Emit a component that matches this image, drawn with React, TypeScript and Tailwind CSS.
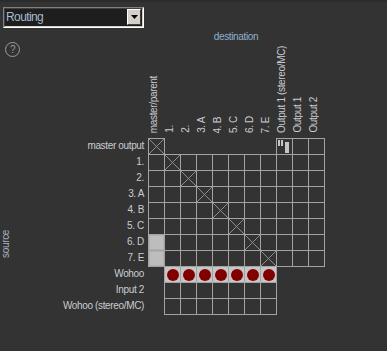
import React from 'react';

type Kind = '-' | 'box' | 'x' | 'fill' | 'dot' | 'meter';

const columns = [
  'master/parent',
  '1.',
  '2.',
  '3. A',
  '4. B',
  '5. C',
  '6. D',
  '7. E',
  'Output 1 (stereo/MC)',
  'Output 1',
  'Output 2',
];

const channelRows = ['1.', '2.', '3. A', '4. B', '5. C', '6. D', '7. E'];

const rows: { label: string; cells: Kind[] }[] = [
  { label: 'master output', cells: ['x', '-', '-', '-', '-', '-', '-', '-', 'meter', 'box', 'box'] },
  ...channelRows.map((label, r) => ({
    label,
    cells: columns.map((_, c): Kind => {
      if (c === r + 1) return 'x';
      if (c === 0 && r >= 5) return 'fill';
      return 'box';
    }),
  })),
  { label: 'Wohoo', cells: ['-', 'dot', 'dot', 'dot', 'dot', 'dot', 'dot', 'dot', '-', '-', '-'] },
  { label: 'Input 2', cells: ['-', 'box', 'box', 'box', 'box', 'box', 'box', 'box', '-', '-', '-'] },
  { label: 'Wohoo (stereo/MC)', cells: ['-', 'box', 'box', 'box', 'box', 'box', 'box', 'box', '-', '-', '-'] },
];

const Cell = ({ kind }: { kind: Kind }) => {
  if (kind === '-') return <div />;
  return (
    <div className="w-[17px] h-[17px] border border-[#a3a3a3] flex items-center justify-center">
      {kind === 'x' && (
        <svg width="15" height="15" viewBox="0 0 15 15">
          <path d="M0 0L15 15M15 0L0 15" stroke="#8e8e8e" strokeWidth="1" />
        </svg>
      )}
      {kind === 'fill' && <div className="w-full h-full bg-[#bdbdbd] border border-[#b0b0b0]" />}
      {kind === 'dot' && (
        <div className="w-full h-full bg-[#c6c6c6] flex items-center justify-center">
          <div className="w-[12px] h-[12px] rounded-full bg-[#800000]" />
        </div>
      )}
      {kind === 'meter' && (
        <svg width="15" height="15" viewBox="0 0 15 15">
          <rect x="1" y="1" width="2" height="6" fill="#c4c4c4" />
          <rect x="4" y="1" width="2" height="6" fill="#c4c4c4" />
          <rect x="8" y="3" width="4" height="11" fill="#c4c4c4" />
        </svg>
      )}
    </div>
  );
};

export default function App() {
  return (
    <div className="w-full h-[351px] bg-[#333333] font-['Liberation_Sans',Arial,sans-serif] overflow-hidden">
      <div className="h-[2px] bg-[#2b2b2b]" />

      {/* view selector */}
      <div className="mt-[5px] ml-[3px] w-[141px] h-[21px] border border-t-[#808080] border-l-[#808080] border-b-white border-r-white">
        <div className="h-full border border-t-[#404040] border-l-[#404040] border-b-[#d4d0c8] border-r-[#d4d0c8] bg-[#1e1e1e] flex items-start">
          <span className="flex-1 pl-[1px] text-[12px] leading-[17px] tracking-[-0.6px] text-[#a9bccd]">Routing</span>
          <div className="mr-[1px] w-[14px] h-[16px] bg-[#d4d0c8] border border-t-white border-l-white border-b-[#404040] border-r-[#404040] flex items-center justify-center">
            <svg width="7" height="4" viewBox="0 0 7 4">
              <path d="M0 0H7L3.5 4Z" fill="#000" />
            </svg>
          </div>
        </div>
      </div>

      <div className="grid grid-cols-[12px_136px_repeat(11,16px)] grid-rows-[15px_95px_repeat(11,16px)] text-[10px] tracking-[-0.35px] text-[#c8ccd0]">
        <div className="col-start-1 col-span-2 row-start-1 row-span-2">
          <div className="ml-[5px] mt-[14px] w-[15px] h-[15px] rounded-full border border-[#9c9c9c] text-[#9c9c9c] text-[10px] leading-none flex items-center justify-center">
            ?
          </div>
        </div>
        <div className="col-start-3 col-span-11 row-start-1 pt-[3px] text-center leading-[12px] text-[#8fb0cc]">destination</div>

        {columns.map((c) => (
          <div key={c} className="row-start-2 flex flex-col justify-end items-start pb-[5px]">
            <span className="[writing-mode:vertical-rl] rotate-180 whitespace-nowrap leading-[12px]">{c}</span>
          </div>
        ))}

        <div className="col-start-1 row-start-3 row-span-11 flex items-center pt-[36px]">
          <span className="[writing-mode:vertical-rl] rotate-180 leading-[11px] text-[#a9b4bf]">source</span>
        </div>

        {rows.map((row) => (
          <React.Fragment key={row.label}>
            <div className="pr-[4px] text-right leading-[16px] whitespace-nowrap">{row.label}</div>
            {row.cells.map((k, i) => (
              <Cell key={i} kind={k} />
            ))}
          </React.Fragment>
        ))}
      </div>
    </div>
  );
}
